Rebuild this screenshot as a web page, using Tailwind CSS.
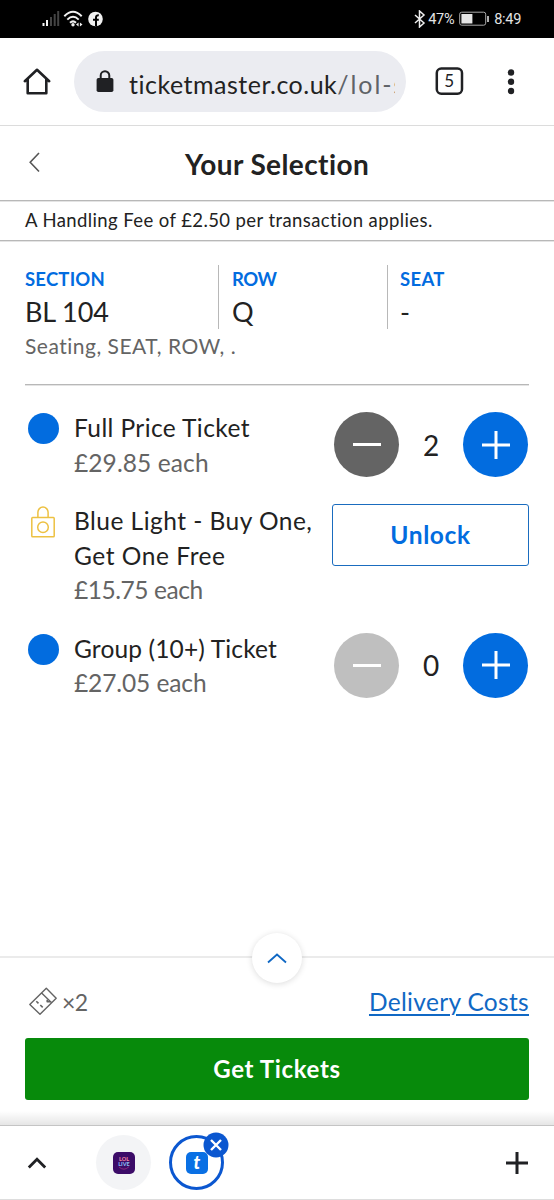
<!DOCTYPE html>
<html lang="en">
<head>
<meta charset="utf-8">
<title>Your Selection</title>
<script src="https://cdn.jsdelivr.net/npm/@tailwindcss/browser@4"></script>
</head>
<body class="bg-white">
<div class="flex h-[1200px] w-[554px] flex-col overflow-hidden bg-white font-['Lato',sans-serif] whitespace-nowrap text-[#222]">

  <!-- Status bar -->
  <div class="flex h-[38px] shrink-0 items-center justify-between bg-black pr-[33px] pl-[42px] text-[#e4e4e4]">
    <svg width="64" height="20" viewBox="0 0 64 20" fill="none">
      <path d="M1.5 17v-3M5 17v-6" stroke="#f4f4f4" stroke-width="2"/>
      <path d="M9 17V8M12.7 17V5M16.2 17V2" stroke="#444" stroke-width="2"/>
      <path d="M22.3 7.2Q31-1.6 39.7 7.2M25.3 10.6Q31 5 36.7 10.6M28 13.8Q31 11 34 13.8" stroke="#f0f0f0" stroke-width="2"/>
      <circle cx="31" cy="15.7" r="1.7" fill="#f0f0f0"/>
      <path d="M34 15.5l2.6-2v4zM40.5 15.5l-2.6-2v4z" fill="#f0f0f0"/>
      <circle cx="53.5" cy="10" r="7.3" fill="#f0f0f0"/>
      <path d="M54 17V8.6Q54 6 56.8 6.2M51 10.7h5.8" stroke="#000" stroke-width="2"/>
    </svg>
    <div class="flex items-center font-['Roboto',sans-serif] text-[14.5px] leading-[20px]">
      <svg width="12" height="18" viewBox="0 0 12 18" fill="none" stroke="#eee" stroke-width="1.5"><path d="M1 5l9 8-4.5 4V1L10 5l-9 8"/></svg>
      <span class="ml-[2px] pt-[2px] tracking-[-0.3px]">47%</span>
      <svg class="ml-[5px]" width="31" height="16" viewBox="0 0 31 16" fill="none"><rect x=".7" y="1.2" width="26" height="13" rx="2" stroke="#aaa"/><path d="M2.4 3h11v9.5h-11z" fill="#e6e6e6"/><path d="M29 5v6" stroke="#ddd" stroke-width="1.6"/></svg>
      <span class="ml-[4px] pt-[2px] tracking-[-0.3px]">8:49</span>
    </div>
  </div>

  <!-- Browser toolbar -->
  <div class="flex h-[88px] shrink-0 items-center border-b border-[#dcdcdc] pl-[22px]">
    <svg width="30" height="30" viewBox="0 0 30 30" fill="none" stroke="#202124" stroke-width="2.6" stroke-linejoin="round" stroke-linecap="round"><path d="M2.8 14.2L15 2.8l12.2 11.4M5.7 12.5v13.7h18.6V12.5"/></svg>
    <div class="ml-[22px] flex h-[61px] w-[332px] items-center rounded-full bg-[#ebecf1] pl-[22px]">
      <svg width="18" height="24" viewBox="0 0 18 24"><rect x=".6" y="8" width="16.8" height="14" rx="1.8" fill="#202124"/><path d="M4.7 8.5V5.5a4.3 4.3 0 018.6 0v3" fill="none" stroke="#202124" stroke-width="2"/></svg>
      <div class="ml-[15px] flex w-[266px] overflow-hidden pt-[4px] text-[25px] leading-[34px]"><span class="tracking-[0.5px]">ticketmaster.co.uk</span><span class="tracking-[1.9px] text-[#5f6368]">/lol-s</span></div>
    </div>
    <svg class="ml-[29px]" width="29" height="29" viewBox="0 0 29 29"><rect x="1.8" y="1.6" width="25.2" height="25.2" rx="4.5" fill="none" stroke="#202124" stroke-width="2.5"/><text x="14.3" y="20" text-anchor="middle" font-family="Lato" font-size="17" fill="#202124">5</text></svg>
    <svg class="ml-[43px]" width="8" height="26" viewBox="0 0 8 26" fill="#202124"><circle cx="4" cy="3.5" r="3.2"/><circle cx="4" cy="12.8" r="3.2"/><circle cx="4" cy="22" r="3.2"/></svg>
  </div>

  <!-- Page heading -->
  <div class="grid h-[75px] shrink-0 grid-cols-[28px_1fr_28px] items-center border-b border-[#b8b8b8] px-[25px] shadow-[0_1px_0_#e4e4e4]">
    <svg class="ml-[4px]" width="12" height="22" viewBox="0 0 12 22" fill="none" stroke="#555" stroke-width="1.6"><path d="M10 1L1.2 10.2 10 19.5"/></svg>
    <h1 class="pt-[1px] text-center text-[28px] leading-[40px] font-bold tracking-[0.4px]">Your Selection</h1>
  </div>
  <div class="h-[40px] shrink-0 border-b border-[#b8b8b8] pl-[25px] text-[18.5px] leading-[39px] tracking-[0.4px] shadow-[0_1px_0_#e4e4e4]">A Handling Fee of £2.50 per transaction applies.</div>

  <!-- Seat information -->
  <div class="mx-[25px] h-[144px] shrink-0 border-b border-[#b8b8b8] pt-[24px] shadow-[0_1px_0_#e4e4e4]">
    <div class="grid h-[64px] grid-cols-[193px_168.5px_1fr] grid-rows-[64px]">
      <div><div class="h-[28px] text-[18.5px] leading-[28px] font-bold tracking-[0.2px] text-[#026cdf]">SECTION</div><div class="text-[27px] leading-[38px] tracking-[-0.1px]">BL 104</div></div>
      <div class="border-l border-[#b8b8b8] pl-[13px]"><div class="h-[28px] text-[18.5px] leading-[28px] font-bold tracking-[-0.4px] text-[#026cdf]">ROW</div><div class="text-[27px] leading-[38px]">Q</div></div>
      <div class="border-l border-[#b8b8b8] pl-[12.5px]"><div class="h-[28px] text-[18.5px] leading-[28px] font-bold tracking-[0.3px] text-[#026cdf]">SEAT</div><div class="text-[27px] leading-[38px]">-</div></div>
    </div>
    <div class="text-[21px] leading-[33px] tracking-[0.5px] text-[#646464]">Seating, SEAT, ROW, .</div>
  </div>

  <!-- Ticket types -->
  <div class="flex flex-1 flex-col gap-[24px] pt-[25px] pr-[26px] pl-[28px] text-[24.5px] leading-[34.5px]">
    <div class="flex">
      <div class="mt-[3px] mr-[15px] size-[31px] rounded-full bg-[#026cdf]"></div>
      <div class="mt-[1px] mb-[-1px] flex-1"><div class="tracking-[0.4px]">Full Price Ticket</div><div class="tracking-[0.1px] text-[#646464]">£29.85 each</div></div>
      <div class="flex items-center">
        <div class="flex size-[65px] items-center justify-center rounded-full bg-[#646464]"><div class="h-[3px] w-[28px] bg-white"></div></div>
        <div class="w-[64px] pt-[1px] text-center text-[28px]">2</div>
        <div class="flex size-[65px] items-center justify-center rounded-full bg-[#026cdf]"><svg width="28" height="28" viewBox="0 0 28 28" stroke="#fff" stroke-width="3"><path d="M0 14h28M14 0v28"/></svg></div>
      </div>
    </div>
    <div class="flex">
      <svg class="mt-[3px] mr-[15px]" width="31" height="33" viewBox="0 0 31 33" fill="none" stroke="#edc142" stroke-width="1.5"><rect x="3.8" y="11.6" width="22.4" height="19.2" rx=".8"/><path d="M9.9 11.5V6.2a5.1 5.1 0 0110.2 0v5.3"/><circle cx="15" cy="21.2" r="5.3"/></svg>
      <div class="mt-[1px] mb-[-1px] flex-1"><div class="tracking-[0.47px]">Blue Light - Buy One,</div><div class="tracking-[0.55px]">Get One Free</div><div class="tracking-[-0.45px] text-[#646464]">£15.75 each</div></div>
      <div class="mt-[1px] mr-[-1px] flex h-[62px] w-[197px] items-center justify-center rounded-[3px] border-[1.5px] border-[#1a6cbf] pt-[1px] font-bold tracking-[0.6px] text-[#026cdf]">Unlock</div>
    </div>
    <div class="flex">
      <div class="mt-[3px] mr-[15px] size-[31px] rounded-full bg-[#026cdf]"></div>
      <div class="mt-[1px] mb-[-1px] flex-1"><div class="tracking-[0.15px]">Group (10+) Ticket</div><div class="tracking-[-0.1px] text-[#646464]">£27.05 each</div></div>
      <div class="flex items-center">
        <div class="flex size-[65px] items-center justify-center rounded-full bg-[#bfbfbf]"><div class="h-[3px] w-[28px] bg-white"></div></div>
        <div class="w-[64px] pt-[1px] text-center text-[28px]">0</div>
        <div class="flex size-[65px] items-center justify-center rounded-full bg-[#026cdf]"><svg width="28" height="28" viewBox="0 0 28 28" stroke="#fff" stroke-width="3"><path d="M0 14h28M14 0v28"/></svg></div>
      </div>
    </div>
  </div>

  <!-- Order summary -->
  <div class="relative h-[169px] shrink-0 border-t-2 border-[#ebebeb] px-[25px] pt-[26px]">
    <div class="absolute top-[-25px] left-[252px] flex size-[50px] items-center justify-center rounded-full bg-white shadow-[0_1px_6px_rgba(0,0,0,0.14)]">
      <svg width="20" height="12" viewBox="0 0 20 12" fill="none" stroke="#1068c4" stroke-width="1.8"><path d="M1 10.5L10 2.5l9 8"/></svg>
    </div>
    <div class="flex h-[36px] items-center text-[24.5px] leading-[36px]">
      <svg class="mt-[-2px] ml-[3px]" width="30" height="30" viewBox="0 0 30 30" fill="none" stroke="#646464" stroke-width="1.4" stroke-linejoin="round"><path d="M18.3 2.2L28.2 12.2 12 28.3 1.8 18.6zM13.6 7L23.6 16.8"/><path d="M8.3 15.2l2.2 2.2M12.3 19l2.4 2.4M19.2 13.8v2h3.2" stroke-width="1.6"/></svg>
      <span class="ml-[4px] text-[23px] tracking-[-0.5px] text-[#646464]">×2</span>
      <a class="ml-auto tracking-[0.32px] text-[#1068c4] underline decoration-2 underline-offset-[3px]">Delivery Costs</a>
    </div>
    <div class="mt-[18px] flex h-[62px] items-center justify-center rounded-[3px] bg-[#078a0b] text-[24px] font-bold tracking-[0.65px] text-white">Get Tickets</div>
  </div>

  <!-- Tab strip -->
  <div class="relative flex h-[75px] shrink-0 items-center border-t border-b border-t-[#c4c4c4] border-b-[#ddd] pl-[27px]">
    <div class="absolute top-[-15px] left-0 h-[14px] w-full bg-linear-to-b from-transparent to-black/10"></div>
    <svg width="20" height="14" viewBox="0 0 20 14" fill="none" stroke="#202124" stroke-width="2.8"><path d="M1.8 11.5L10 3.3l8.2 8.2"/></svg>
    <div class="ml-[49px] flex size-[55px] items-center justify-center rounded-full bg-[#f3f4f6]">
      <svg width="22" height="22" viewBox="0 0 22 22"><rect width="22" height="22" rx="5" fill="#3c0c68"/><g font-family="Lato" font-weight="900" text-anchor="middle"><text x="11" y="9" font-size="5.5" fill="#f080a0">LOL</text><text x="11" y="14.2" font-size="5.5" fill="#88b8f0">LIVE</text></g><path d="M6 15q5 4.5 10-.3" fill="none" stroke="#a03080" stroke-width=".8"/></svg>
    </div>
    <div class="relative ml-[18px] flex size-[55px] items-center justify-center rounded-full border-3 border-[#0b57d0]">
      <svg width="22" height="22" viewBox="0 0 22 22"><rect width="22" height="22" rx="5" fill="#0a70e4"/><text x="10.8" y="16.5" text-anchor="middle" font-family="Lato" font-weight="900" font-style="italic" font-size="18" fill="#fff">t</text></svg>
      <svg class="absolute top-[-6px] left-[30.5px]" width="26" height="26" viewBox="0 0 26 26"><circle cx="13" cy="13" r="12.5" fill="#0b57d0"/><path d="M8 8l10 10M18 8L8 18" stroke="#fff" stroke-width="2.4"/></svg>
    </div>
    <svg class="mr-[26px] ml-auto" width="22" height="22" viewBox="0 0 22 22" stroke="#202124" stroke-width="3"><path d="M0 11h22M11 0v22"/></svg>
  </div>
</div>
</body>
</html>
